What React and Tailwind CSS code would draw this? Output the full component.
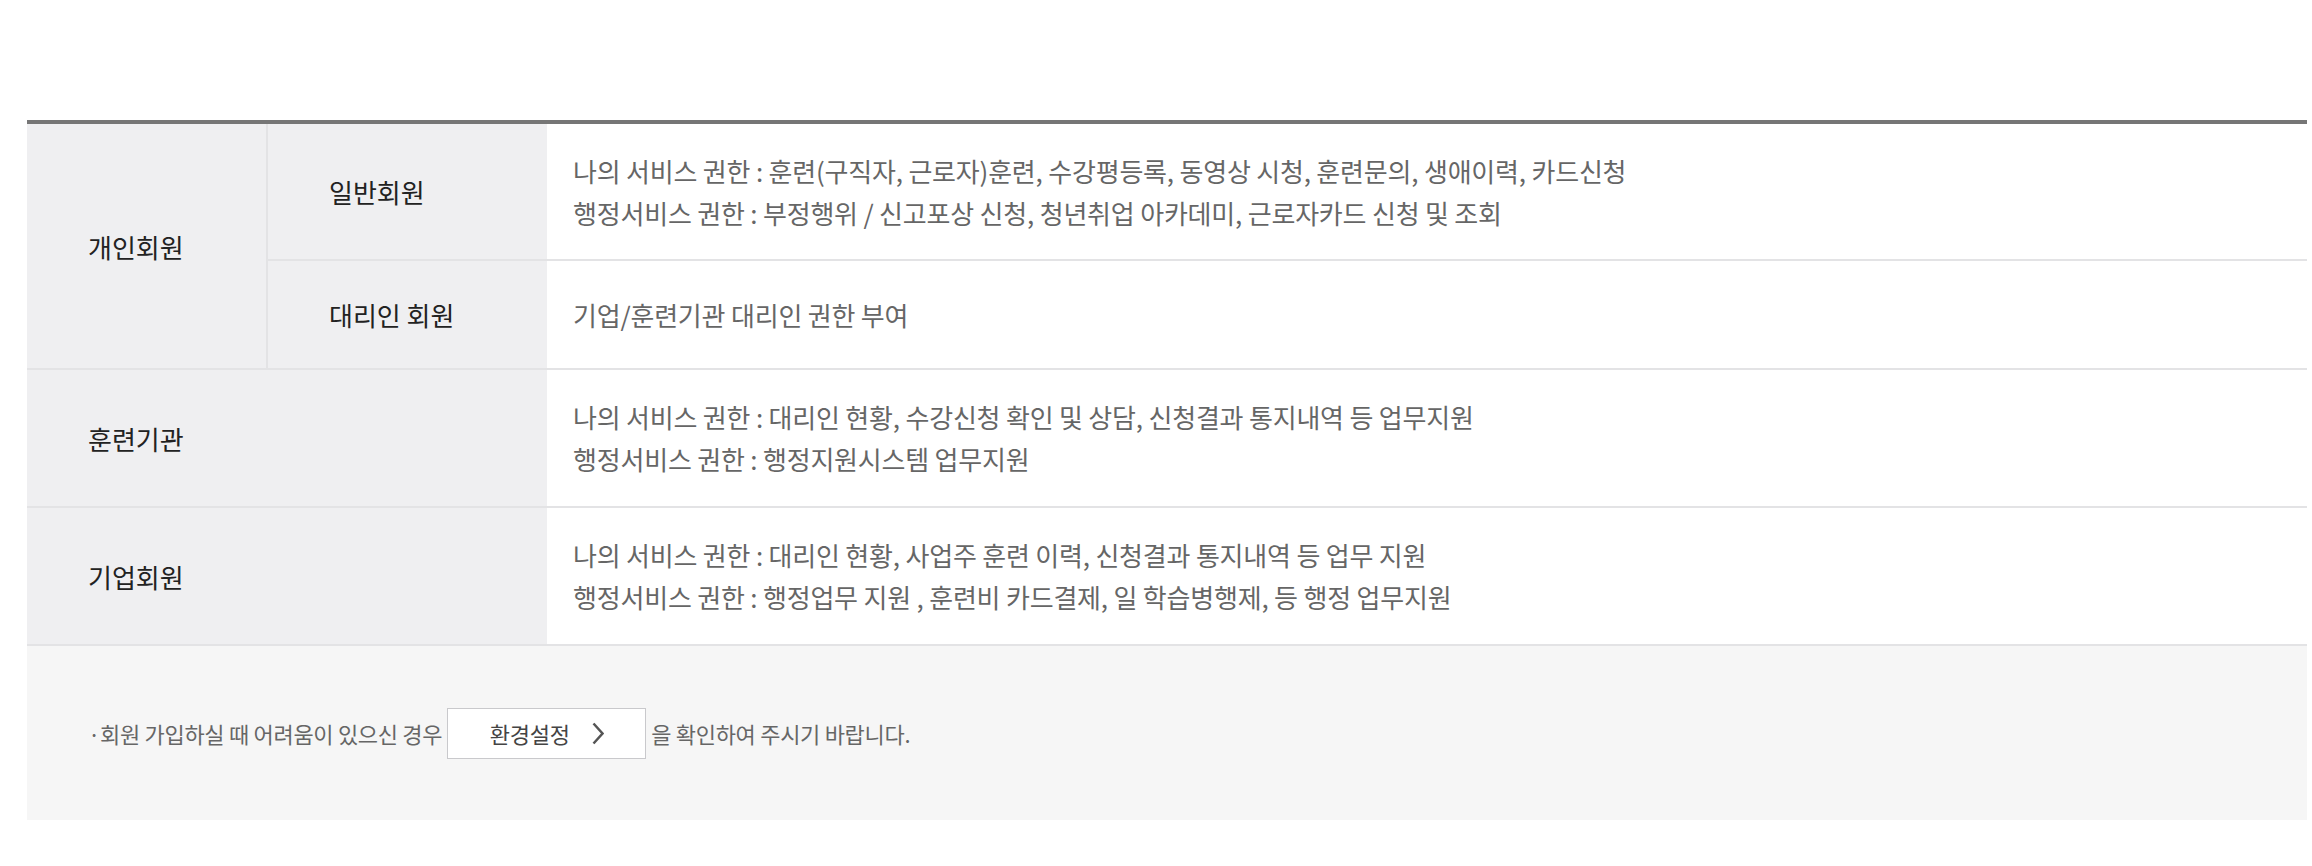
import React from 'react';

const rows = [
    {
        title: '훈련기관',
        lines: [
            '나의 서비스 권한 : 대리인 현황, 수강신청 확인 및 상담, 신청결과 통지내역 등 업무지원',
            '행정서비스 권한 : 행정지원시스템 업무지원',
        ],
    },
    {
        title: '기업회원',
        lines: [
            '나의 서비스 권한 : 대리인 현황, 사업주 훈련 이력, 신청결과 통지내역 등 업무 지원',
            '행정서비스 권한 : 행정업무 지원 , 훈련비 카드결제, 일 학습병행제, 등 행정 업무지원',
        ],
    },
];

const Lines = ({ lines }) => (
    <div className="flex-1 flex flex-col justify-center pl-[26px] text-[26px] leading-[42px] tracking-[-0.2px] text-[#666]">
        {lines.map((line) => (
            <p key={line}>{line}</p>
        ))}
    </div>
);

const App = () => {
    return (
        <div className="bg-white min-h-[866px] pt-[120px]" style={{ fontFamily: '"Noto Sans CJK KR", "Noto Sans", sans-serif' }}>
            <div className="ml-[27px] w-[2280px] border-t-4 border-[#767676]">
                {/* 개인회원 */}
                <div className="flex border-b-2 border-[#e3e3e5]">
                    <div className="w-[241px] shrink-0 border-r-2 border-[#e3e3e5] bg-[#efeff1] flex items-center pl-[61px] text-[26px] text-[#222]">
                        개인회원
                    </div>
                    <div className="flex-1 flex flex-col">
                        <div className="flex h-[137px] border-b-2 border-[#e3e3e5]">
                            <div className="w-[279px] shrink-0 bg-[#efeff1] flex items-center pl-[61px] text-[26px] text-[#222]">
                                일반회원
                            </div>
                            <Lines
                                lines={[
                                    '나의 서비스 권한 : 훈련(구직자, 근로자)훈련, 수강평등록, 동영상 시청, 훈련문의, 생애이력, 카드신청',
                                    '행정서비스 권한 : 부정행위 / 신고포상 신청, 청년취업 아카데미, 근로자카드 신청 및 조회',
                                ]}
                            />
                        </div>
                        <div className="flex h-[107px]">
                            <div className="w-[279px] shrink-0 bg-[#efeff1] flex items-center pl-[61px] text-[26px] text-[#222]">
                                대리인 회원
                            </div>
                            <Lines lines={['기업/훈련기관 대리인 권한 부여']} />
                        </div>
                    </div>
                </div>

                {/* 훈련기관 / 기업회원 */}
                {rows.map((row) => (
                    <div key={row.title} className="flex h-[138px] border-b-2 border-[#e3e3e5]">
                        <div className="w-[520px] shrink-0 bg-[#efeff1] flex items-center pl-[61px] text-[26px] text-[#222]">
                            {row.title}
                        </div>
                        <Lines lines={row.lines} />
                    </div>
                ))}

                {/* 안내 */}
                <div className="h-[174px] bg-[#f6f6f6] flex items-center pl-[61px] text-[22px] tracking-[-0.3px] text-[#666]">
                    <span>·회원 가입하실 때 어려움이 있으신 경우</span>
                    <button className="mx-[5px] h-[51px] w-[199px] border border-[#c9c9cc] bg-white flex items-center justify-center gap-[22px] text-[22px] text-[#444]">
                        <span>환경설정</span>
                        <svg width="12" height="23" viewBox="0 0 12 23" fill="none">
                            <polyline points="1.5,1.5 10.5,11.5 1.5,21.5" stroke="#555" strokeWidth="2.5" />
                        </svg>
                    </button>
                    <span>을 확인하여 주시기 바랍니다.</span>
                </div>
            </div>
        </div>
    );
};

export default App;
